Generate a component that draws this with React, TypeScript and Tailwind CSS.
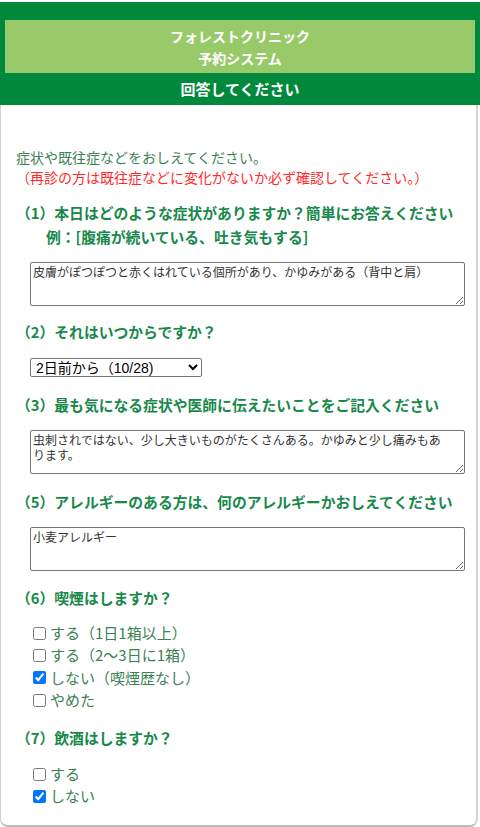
import React from 'react';

const font = { fontFamily: '"Noto Sans CJK JP", "Noto Sans", sans-serif' };

function Heading({ children }: { children: React.ReactNode }) {
  return <div className="text-[14.8px] leading-[24px] font-bold text-[#17894a]">{children}</div>;
}

function Area({ value }: { value: string }) {
  return (
    <textarea
      readOnly
      defaultValue={value}
      className="ml-[14px] mt-[13px] block h-[44px] w-[435px] rounded-[2px] border border-[#767676] py-[1px] pl-[2px] pr-[14px] text-[12px] leading-[15px] text-[#333]"
      style={font}
    />
  );
}

function Check({ label, checked = false }: { label: string; checked?: boolean }) {
  return (
    <label className="flex h-[22.3px] items-center text-[15px] text-[#3b8253]">
      <input type="checkbox" readOnly defaultChecked={checked} className="ml-[3px] mr-[4px] h-[13px] w-[13px]" />
      <span>{label}</span>
    </label>
  );
}

export default function App() {
  return (
    <div className="w-[480px] min-h-[827px] bg-white pt-[2px]" style={font}>
      {/* ヘッダー */}
      <div className="bg-[#00893c] px-[5px] pt-[18px]">
        <div className="flex h-[53px] flex-col items-center justify-center bg-[#99ca6a] text-[14px] font-semibold leading-[22px] text-white">
          <span>フォレストクリニック</span>
          <span>予約システム</span>
        </div>
        <div className="flex h-[32px] items-center justify-center text-[15px] font-bold text-white">
          回答してください
        </div>
      </div>

      <div className="mr-[2px] rounded-b-lg border-x border-b-2 border-l-[#cfcfcf] border-r-2 border-r-[#d4d4d4] border-b-[#bdbdbd] pb-[17px] pl-[15px] pt-[42px]">
        <p className="text-[14px] leading-[20px] text-[#3b8253]">症状や既往症などをおしえてください。</p>
        <p className="text-[14px] leading-[20px] text-[#ff2b2b]">（再診の方は既往症などに変化がないか必ず確認してください。）</p>

        <div className="mt-[14px]">
          <Heading>（1）本日はどのような症状がありますか？簡単にお答えください</Heading>
          <Heading>
            <span className="pl-[30px]">例：[腹痛が続いている、吐き気もする]</span>
          </Heading>
        </div>
        <Area value="皮膚がぽつぽつと赤くはれている個所があり、かゆみがある（背中と肩）" />

        <div className="mt-[14px]">
          <Heading>（2）それはいつからですか？</Heading>
        </div>
        <select
          className="ml-[14px] mt-[14px] block h-[19px] w-[172px] rounded-[2px] border border-[#767676] bg-white py-0 pl-[1px] text-[14px] leading-[15px] text-black"
          style={{ fontFamily: '"Liberation Sans", "Noto Sans CJK JP", sans-serif' }}
          defaultValue="a"
        >
          <option value="a">2日前から（10/28)</option>
        </select>

        <div className="mt-[16px]">
          <Heading>（3）最も気になる症状や医師に伝えたいことをご記入ください</Heading>
        </div>
        <Area value="虫刺されではない、少し大きいものがたくさんある。かゆみと少し痛みもあります。" />

        <div className="mt-[16px]">
          <Heading>（5）アレルギーのある方は、何のアレルギーかおしえてください</Heading>
        </div>
        <Area value="小麦アレルギー" />

        <div className="mt-[15px]">
          <Heading>（6）喫煙はしますか？</Heading>
        </div>
        <div className="ml-[14px] mt-[12px] flex flex-col">
          <Check label="する（1日1箱以上）" />
          <Check label="する（2〜3日に1箱）" />
          <Check label="しない（喫煙歴なし）" checked />
          <Check label="やめた" />
        </div>

        <div className="mt-[15px]">
          <Heading>（7）飲酒はしますか？</Heading>
        </div>
        <div className="ml-[14px] mt-[13px] flex flex-col">
          <Check label="する" />
          <Check label="しない" checked />
        </div>
      </div>
    </div>
  );
}
